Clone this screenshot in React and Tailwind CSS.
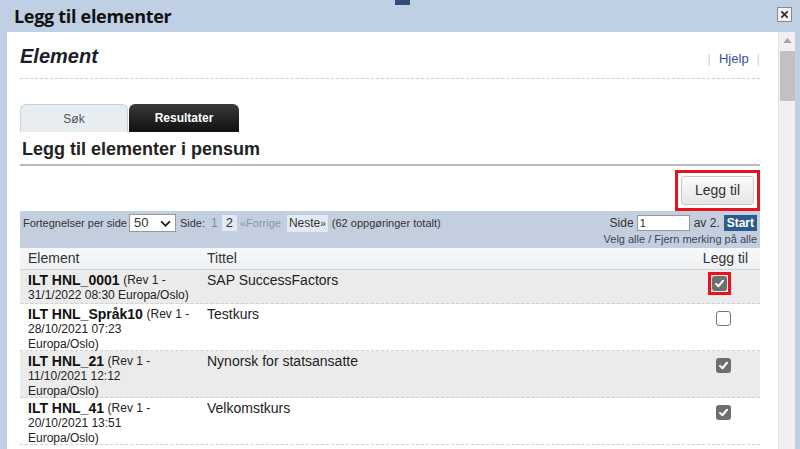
import React from "react";

const rows = [
  { id: "ILT HNL_0001", rev: "(Rev 1 - 31/1/2022 08:30 Europa/Oslo)", title: "SAP SuccessFactors", checked: true, shade: true, mark: true, h: "h-[34px]" },
  { id: "ILT HNL_Språk10", rev: "(Rev 1 - 28/10/2021 07:23 Europa/Oslo)", title: "Testkurs", checked: false, shade: false, h: "h-[47px]" },
  { id: "ILT HNL_21", rev: "(Rev 1 - 11/10/2021 12:12 Europa/Oslo)", title: "Nynorsk for statsansatte", checked: true, shade: true, h: "h-[47px]" },
  { id: "ILT HNL_41", rev: "(Rev 1 - 20/10/2021 13:51 Europa/Oslo)", title: "Velkomstkurs", checked: true, shade: false, h: "h-[47px]" },
];

const Box = ({ checked }) =>
  checked ? (
    <span className="flex h-[15px] w-[15px] items-center justify-center rounded-[3px] bg-[#6e6e6e]">
      <svg viewBox="0 0 12 12" className="h-[11px] w-[11px]">
        <path d="M2.2 6.4 L4.8 9 L9.8 3" fill="none" stroke="#fff" strokeWidth="2.2" strokeLinecap="round" strokeLinejoin="round" />
      </svg>
    </span>
  ) : (
    <span className="block h-[15px] w-[15px] rounded-[3px] border border-[#767676] bg-white" />
  );

export default function App() {
  return (
    <div className="relative h-[449px] w-[800px] overflow-hidden bg-[#bfcfe4] font-['Liberation_Sans',Arial,sans-serif] text-[#222]">
      <div className="absolute left-[395px] top-0 h-[5px] w-[15px] bg-[#2f4d78]" />
      {/* title bar */}
      <div className="flex h-[32px] items-center justify-between pl-[14px] pr-[8px]">
        <span className="font-['Open_Sans',sans-serif] text-[18px] font-bold tracking-[-0.3px] text-[#111]">Legg til elementer</span>
        <span className="mb-[4px] flex h-[15px] w-[15px] items-center justify-center border border-[#8a8a8a] bg-[#f2f2f2]">
          <svg viewBox="0 0 10 10" className="h-[9px] w-[9px]">
            <path d="M1.5 1.5 L8.5 8.5 M8.5 1.5 L1.5 8.5" stroke="#333" strokeWidth="2" />
          </svg>
        </span>
      </div>

      <div className="flex h-[417px]">
        <div className="w-[7px]" />
        <div className="flex-1 bg-white pl-[13px] pr-[18px]">
          {/* header */}
          <div className="flex h-[47px] items-end justify-between border-b border-dashed border-[#c8cdd4] pb-[12px]">
            <span className="text-[20px] font-bold italic leading-none text-[#1e1e2a]">Element</span>
            <span className="mb-[-2px] flex items-center gap-[8px] text-[13px] text-[#3a4f9a]">
              <span className="text-[#cdd3da]">|</span>
              <span>Hjelp</span>
              <span className="text-[#cdd3da]">|</span>
            </span>
          </div>

          {/* tabs */}
          <div className="mt-[25px] flex h-[28px] items-end pl-0">
            <div className="flex h-[28px] w-[108px] items-center justify-center rounded-t-[6px] border border-b-0 border-[#c9cfd6] bg-[#e8edf2] text-[12px] text-[#555]">
              Søk
            </div>
            <div className="ml-[1px] flex h-[28px] w-[110px] items-center justify-center rounded-t-[6px] bg-gradient-to-b from-[#3a3a3a] to-[#111] text-[12px] font-bold text-white">
              Resultater
            </div>
          </div>

          <div className="flex h-[34px] items-center border-b-2 border-[#b8b8b8] pl-[2px] pt-[3px]">
            <span className="text-[18px] font-bold text-[#222]">Legg til elementer i pensum</span>
          </div>

          {/* action button */}
          <div className="flex h-[45px] items-end justify-end">
            <div className="border-[3px] border-[#e8121c] p-[3px]">
              <div className="flex h-[29px] w-[73px] items-center justify-center rounded-[3px] border border-[#c8c8c8] bg-gradient-to-b from-[#fafafa] to-[#e6e6e6] text-[14px] text-[#333]">
                Legg til
              </div>
            </div>
          </div>

          {/* toolbar */}
          <div className="flex h-[37px] justify-between bg-[#c3cfdf] pl-[3px] pr-[3px] pt-[3px] text-[11px] text-[#333]">
            <div className="flex h-[18px] items-center">
              <span>Fortegnelser per side</span>
              <span className="ml-[2px] flex h-[18px] w-[47px] items-center justify-between border border-[#999] bg-white px-[4px] text-[13px]">
                50
                <svg viewBox="0 0 10 6" className="h-[7px] w-[11px]">
                  <path d="M1 1 L5 5 L9 1" fill="none" stroke="#222" strokeWidth="1.6" />
                </svg>
              </span>
              <span className="ml-[4px] text-[11px]">Side:</span>
              <span className="ml-[6px] text-[12px] text-[#7b8aa5]">1</span>
              <span className="ml-[4px] bg-[#e3eaf3] px-[4px] text-[13px] leading-[16px]">2</span>
              <span className="ml-[3px] text-[#8c97a8]">«Forrige</span>
              <span className="ml-[6px] bg-[#e3eaf3] px-[2px] text-[12px] leading-[16px]">Neste<span className="text-[10px]">»</span></span>
              <span className="ml-[4px]">(62 oppgøringer totalt)</span>
            </div>
            <div className="flex flex-col items-end">
              <div className="flex h-[18px] items-center text-[12px]">
                <span>Side</span>
                <span className="ml-[3px] h-[16px] w-[53px] border border-[#999] bg-white pl-[2px] text-[11px] leading-[14px]">1</span>
                <span className="ml-[4px]">av 2.</span>
                <span className="ml-[4px] flex h-[16px] items-center bg-[#2c5c8c] px-[3px] text-[12px] font-bold text-white">Start</span>
              </div>
              <span className="mt-[1px] text-[11px] leading-[12px] text-[#445]">Velg alle / Fjern merking på alle</span>
            </div>
          </div>

          {/* table header */}
          <div className="grid h-[22px] grid-cols-[179px_1fr_60px] items-center border-b border-[#cfd3d8] bg-gradient-to-b from-[#f7f8fa] to-[#eef1f4] pl-[8px] text-[14px] text-[#333]">
            <span>Element</span>
            <span>Tittel</span>
            <span className="pr-[12px] text-right">Legg til</span>
          </div>

          {rows.map((r) => (
            <div
              key={r.id}
              className={`grid ${r.h} grid-cols-[179px_1fr_60px] items-start border-b border-dashed border-[#c7d0dc] pl-[8px] pt-[3px] text-[13px] leading-[15px] ${r.shade ? "bg-[#ebebeb]" : "bg-white"}`}
            >
              <span className="w-[164px] text-[#222]">
                <b className="align-top text-[14px] text-[#111]">{r.id}</b>{" "}
                <span className="align-top text-[12px]">{r.rev}</span>
              </span>
              <span className="text-[14px] text-[#222]">{r.title}</span>
              <span className="flex justify-end pr-[29px]">
                {r.mark ? (
                  <span className="-mt-[1px] border-[3px] border-[#e8121c] p-[1px]">
                    <Box checked={r.checked} />
                  </span>
                ) : (
                  <span className="mt-[4px]">
                    <Box checked={r.checked} />
                  </span>
                )}
              </span>
            </div>
          ))}
        </div>

        {/* scrollbar */}
        <div className="flex w-[17px] flex-col items-center border-l border-[#e4e4e4] bg-[#f0f0f0]">
          <svg viewBox="0 0 10 6" className="mt-[6px] h-[5px] w-[9px]">
            <path d="M0 6 L5 0 L10 6 Z" fill="#a3a3a3" />
          </svg>
          <div className="mt-[8px] h-[50px] w-[15px] bg-[#c1c1c1]" />
        </div>
        <div className="w-[5px]" />
      </div>
    </div>
  );
}
